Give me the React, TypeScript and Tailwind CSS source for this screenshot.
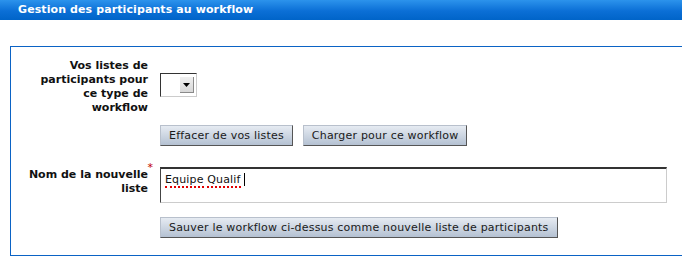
import React from "react";

const btn =
  "h-[21px] px-[8px] text-[11px] tracking-[0.2px] leading-[19px] text-[#1a1a1a] border border-t-[#b8c0cc] border-l-[#b8c0cc] border-r-[#555] border-b-[#555] bg-[linear-gradient(to_bottom,#e6ebf2,#cdd6e2_50%,#b4c1d2)] whitespace-nowrap";

const spell =
  "inline-block leading-[13px] border-b-[2px] border-dotted border-b-[#e00000]";

export default function App() {
  return (
    <div className="w-[682px] h-[264px] bg-white overflow-hidden font-['DejaVu_Sans',Verdana,sans-serif]">
      <div className="h-[20px] pl-[18px] text-[11px] tracking-[0.1px] leading-[20px] font-bold text-white bg-[linear-gradient(to_bottom,#2c93ec,#0b6fd6_55%,#0064c8)]">
        Gestion des participants au workflow
      </div>
      <div className="mt-[26px] ml-[10px] w-[700px] h-[210px] border border-r-0 border-[#0b63c5] pt-[12px]">
        <div className="flex items-start">
          <div className="w-[137px] flex justify-end">
            <div className="w-[124px] text-right text-[11px] leading-[14px] font-bold text-[#111]">
              Vos listes de participants pour ce type de workflow
            </div>
          </div>
          <div className="ml-[12px] mt-[14px] w-[37px] h-[24px] bg-white border border-t-[#333] border-l-[#333] border-r-[#ccc] border-b-[#ccc] flex items-center justify-end pr-[2px]">
            <div className="w-[14px] h-[16px] bg-[linear-gradient(to_bottom,#f0f0f0,#d8d8d8)] border-r border-b border-r-[#8a8a8a] border-b-[#8a8a8a] flex items-center justify-center">
              <svg width="7" height="4" viewBox="0 0 7 4">
                <polygon points="0,0 7,0 3.5,4" fill="#000" />
              </svg>
            </div>
          </div>
        </div>
        <div className="flex gap-[10px] ml-[149px] mt-[10px]">
          <button className={btn}>Effacer de vos listes</button>
          <button className={btn}>Charger pour ce workflow</button>
        </div>
        <div className="flex items-start mt-[21px]">
          <div className="w-[137px] flex justify-end">
            <div className="relative w-[124px] pt-[1px] text-right text-[11px] leading-[14px] font-bold text-[#111]">
              Nom de la nouvelle liste
              <span className="absolute right-[-5px] top-[-5px] text-[11px] leading-[11px] font-normal text-[#c00000]">
                *
              </span>
            </div>
          </div>
          <div className="ml-[12px] w-[507px] h-[36px] bg-white border-t-2 border-l border-t-[#333] border-l-[#444] border-r border-b border-r-[#ccc] border-b-[#ccc] pl-[4px] pt-[4px] text-[11px] tracking-[0.15px] text-[#111] flex items-start">
            <span className={spell}>Equipe</span>
            <span className="leading-[13px]">&nbsp;</span>
            <span className={spell}>Qualif</span>
            <span className="leading-[13px]">&nbsp;</span>
            <span className="inline-block w-[1px] h-[13px] bg-black" />
          </div>
        </div>
        <div className="ml-[149px] mt-[14px] flex">
          <button className={btn}>
            Sauver le workflow ci-dessus comme nouvelle liste de participants
          </button>
        </div>
      </div>
    </div>
  );
}
